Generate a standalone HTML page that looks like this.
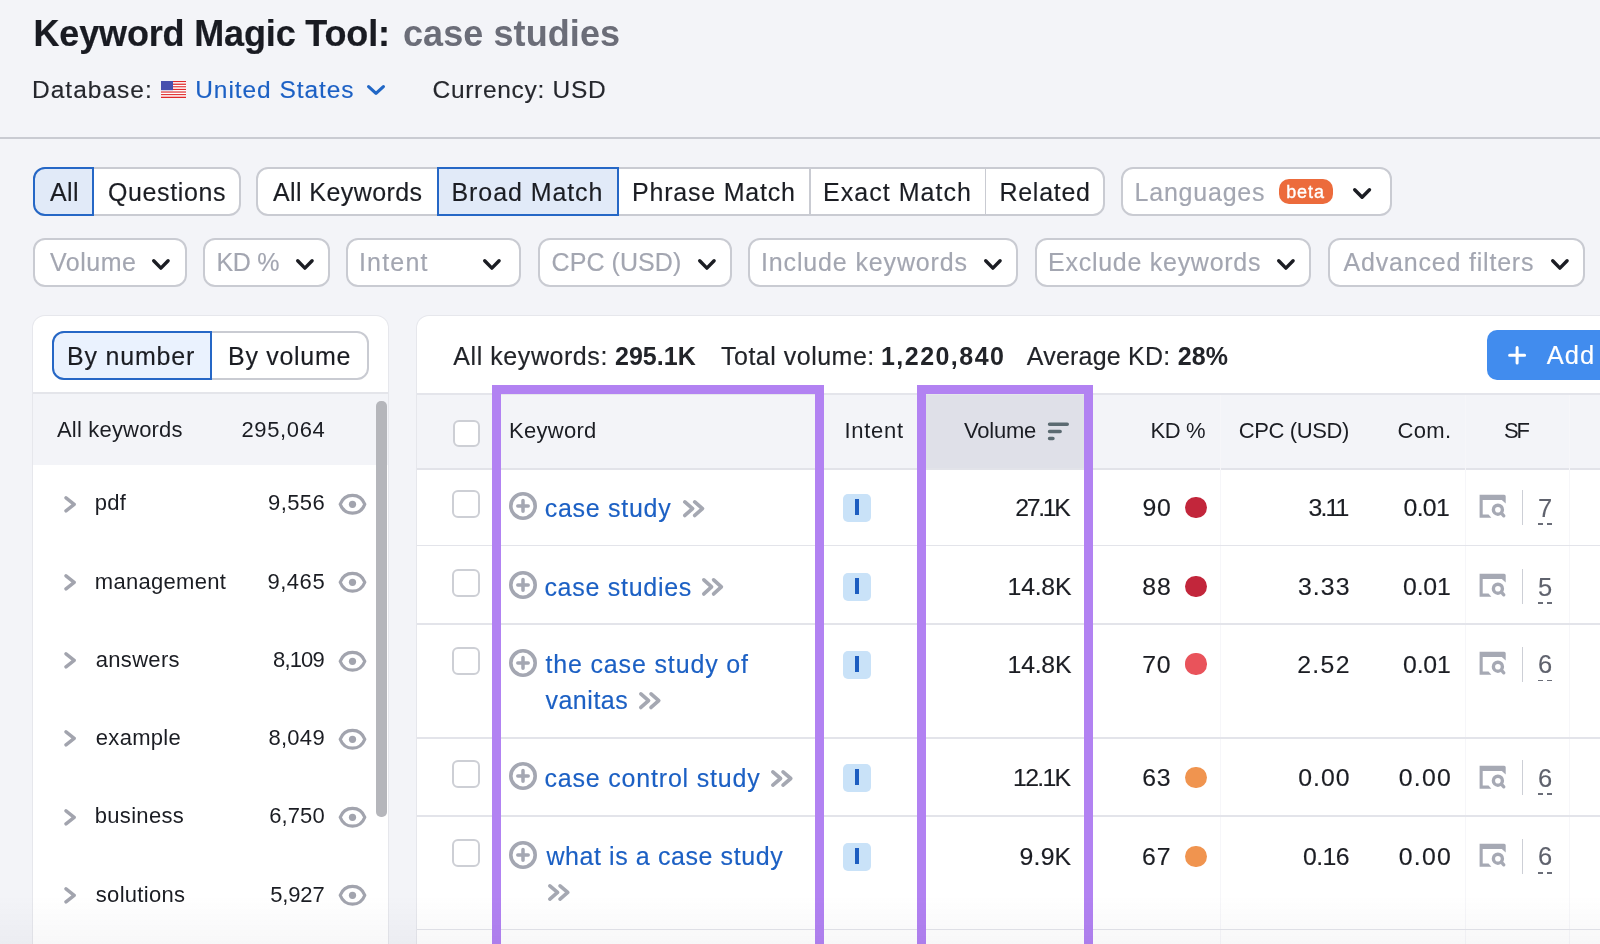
<!DOCTYPE html>
<html><head><meta charset="utf-8"><title>Keyword Magic Tool</title>
<style>
html,body{margin:0;padding:0;}
body{width:1600px;height:944px;overflow:hidden;position:relative;background:#f3f4f8;font-family:"Liberation Sans",sans-serif;}
#root{position:absolute;left:0;top:0;width:1600px;height:944px;will-change:transform;}
.t{position:absolute;white-space:nowrap;}
.t.r{-webkit-text-stroke:0.15px currentColor;}
.b{position:absolute;display:block;}
</style></head><body><div id="root">
<div class="t" style="left:33.50px;top:10.93px;font-size:36px;line-height:46.8px;font-weight:700;color:#191b22;letter-spacing:-0.159px;-webkit-text-stroke:0.2px #191b22;">Keyword Magic Tool:</div>
<div class="t" style="left:403.00px;top:10.93px;font-size:36px;line-height:46.8px;font-weight:700;color:#6b6d78;letter-spacing:0.082px;">case studies</div>
<div class="t r" style="left:32.00px;top:74.29px;font-size:24.5px;line-height:31.85px;font-weight:400;color:#25272d;letter-spacing:1.015px;">Database:</div>
<svg class="b" style="left:161px;top:81px" width="25" height="17" viewBox="0 0 25 17"><rect x="0" y="0.000" width="25" height="1.328" fill="#e0292b"/><rect x="0" y="1.308" width="25" height="1.328" fill="#ffffff"/><rect x="0" y="2.615" width="25" height="1.328" fill="#e0292b"/><rect x="0" y="3.923" width="25" height="1.328" fill="#ffffff"/><rect x="0" y="5.231" width="25" height="1.328" fill="#e0292b"/><rect x="0" y="6.538" width="25" height="1.328" fill="#ffffff"/><rect x="0" y="7.846" width="25" height="1.328" fill="#e0292b"/><rect x="0" y="9.154" width="25" height="1.328" fill="#ffffff"/><rect x="0" y="10.462" width="25" height="1.328" fill="#e0292b"/><rect x="0" y="11.769" width="25" height="1.328" fill="#ffffff"/><rect x="0" y="13.077" width="25" height="1.328" fill="#e0292b"/><rect x="0" y="14.385" width="25" height="1.328" fill="#ffffff"/><rect x="0" y="15.692" width="25" height="1.328" fill="#e0292b"/><rect x="0" y="0" width="12" height="9.2" fill="#4850ad"/></svg>
<div class="t r" style="left:195.20px;top:74.29px;font-size:24.5px;line-height:31.85px;font-weight:400;color:#1c60c4;letter-spacing:0.939px;">United States</div>
<svg class="b" style="left:365px;top:83.4px" width="22" height="14" viewBox="0 0 22 14"><polyline points="3.60,3.60 11.00,10.40 18.40,3.60" fill="none" stroke="#2167c6" stroke-width="3.2" stroke-linecap="round" stroke-linejoin="round"/></svg>
<div class="t r" style="left:432.50px;top:74.29px;font-size:24.5px;line-height:31.85px;font-weight:400;color:#25272d;letter-spacing:0.705px;">Currency: USD</div>
<div class="b" style="left:0px;top:137px;width:1600.00px;height:1.50px;background:#c9cbd2"></div>
<div class="b" style="left:33px;top:167px;width:208.00px;height:49.00px;background:#fff;border:2px solid #c9cbd2;border-radius:12px;box-sizing:border-box"></div>
<div class="b" style="left:33px;top:167px;width:60.50px;height:49.00px;background:#e1eaf8;border:2px solid #2567c6;border-radius:12px 0 0 12px;box-sizing:border-box"></div>
<div class="t r" style="left:50.00px;top:176.49px;font-size:25px;line-height:32.5px;font-weight:400;color:#1b1d23;letter-spacing:0.385px;">All</div>
<div class="t r" style="left:108.00px;top:176.49px;font-size:25px;line-height:32.5px;font-weight:400;color:#1b1d23;letter-spacing:0.617px;">Questions</div>
<div class="b" style="left:256px;top:167px;width:848.50px;height:49.00px;background:#fff;border:2px solid #c9cbd2;border-radius:12px;box-sizing:border-box"></div>
<div class="b" style="left:809.2px;top:168px;width:1.60px;height:47.00px;background:#c9cbd2"></div>
<div class="b" style="left:984.7px;top:168px;width:1.60px;height:47.00px;background:#c9cbd2"></div>
<div class="b" style="left:437px;top:167px;width:182.00px;height:49.00px;background:#e1eaf8;border:2px solid #2567c6;box-sizing:border-box"></div>
<div class="t r" style="left:273.00px;top:176.49px;font-size:25px;line-height:32.5px;font-weight:400;color:#1b1d23;letter-spacing:0.410px;">All Keywords</div>
<div class="t r" style="left:451.50px;top:176.49px;font-size:25px;line-height:32.5px;font-weight:400;color:#1b1d23;letter-spacing:0.917px;">Broad Match</div>
<div class="t r" style="left:632.00px;top:176.49px;font-size:25px;line-height:32.5px;font-weight:400;color:#1b1d23;letter-spacing:0.788px;">Phrase Match</div>
<div class="t r" style="left:823.00px;top:176.49px;font-size:25px;line-height:32.5px;font-weight:400;color:#1b1d23;letter-spacing:1.035px;">Exact Match</div>
<div class="t r" style="left:999.50px;top:176.49px;font-size:25px;line-height:32.5px;font-weight:400;color:#1b1d23;letter-spacing:0.706px;">Related</div>
<div class="b" style="left:1120.5px;top:167px;width:271.50px;height:49.00px;background:#fff;border:2px solid #c9cbd2;border-radius:12px;box-sizing:border-box"></div>
<div class="t r" style="left:1134.50px;top:176.49px;font-size:25px;line-height:32.5px;font-weight:400;color:#a3a6b1;letter-spacing:0.784px;">Languages</div>
<div class="b" style="left:1278.6px;top:178.9px;width:54.70px;height:25.10px;background:#ec6b3c;border-radius:10px"></div>
<div class="t" style="left:1286.20px;top:180.56px;font-size:18px;line-height:23.4px;font-weight:400;color:#fff;letter-spacing:0.926px;-webkit-text-stroke:0.35px #fff;">beta</div>
<svg class="b" style="left:1350.8px;top:185.9px" width="22.2" height="15" viewBox="0 0 22.2 15"><polyline points="3.70,3.70 11.10,11.30 18.50,3.70" fill="none" stroke="#1b1d23" stroke-width="3.4" stroke-linecap="round" stroke-linejoin="round"/></svg>
<div class="b" style="left:33px;top:238px;width:154.00px;height:49.00px;background:#fff;border:2px solid #c9cbd2;border-radius:12px;box-sizing:border-box"></div>
<div class="t r" style="left:50.00px;top:245.79px;font-size:25px;line-height:32.5px;font-weight:400;color:#a3a6b1;letter-spacing:0.504px;">Volume</div>
<svg class="b" style="left:150.2px;top:256.9px" width="21.8" height="14.8" viewBox="0 0 21.8 14.8"><polyline points="3.70,3.70 10.90,11.10 18.10,3.70" fill="none" stroke="#1b1d23" stroke-width="3.4" stroke-linecap="round" stroke-linejoin="round"/></svg>
<div class="b" style="left:202.5px;top:238px;width:127.50px;height:49.00px;background:#fff;border:2px solid #c9cbd2;border-radius:12px;box-sizing:border-box"></div>
<div class="t r" style="left:216.50px;top:245.79px;font-size:25px;line-height:32.5px;font-weight:400;color:#a3a6b1;letter-spacing:-0.300px;">KD %</div>
<svg class="b" style="left:293.7px;top:256.9px" width="21.8" height="14.8" viewBox="0 0 21.8 14.8"><polyline points="3.70,3.70 10.90,11.10 18.10,3.70" fill="none" stroke="#1b1d23" stroke-width="3.4" stroke-linecap="round" stroke-linejoin="round"/></svg>
<div class="b" style="left:345.5px;top:238px;width:175.50px;height:49.00px;background:#fff;border:2px solid #c9cbd2;border-radius:12px;box-sizing:border-box"></div>
<div class="t r" style="left:359.00px;top:245.79px;font-size:25px;line-height:32.5px;font-weight:400;color:#a3a6b1;letter-spacing:1.179px;">Intent</div>
<svg class="b" style="left:481.2px;top:256.9px" width="21.8" height="14.8" viewBox="0 0 21.8 14.8"><polyline points="3.70,3.70 10.90,11.10 18.10,3.70" fill="none" stroke="#1b1d23" stroke-width="3.4" stroke-linecap="round" stroke-linejoin="round"/></svg>
<div class="b" style="left:537.5px;top:238px;width:194.50px;height:49.00px;background:#fff;border:2px solid #c9cbd2;border-radius:12px;box-sizing:border-box"></div>
<div class="t r" style="left:551.50px;top:245.79px;font-size:25px;line-height:32.5px;font-weight:400;color:#a3a6b1;letter-spacing:0.083px;">CPC (USD)</div>
<svg class="b" style="left:696.2px;top:256.9px" width="21.8" height="14.8" viewBox="0 0 21.8 14.8"><polyline points="3.70,3.70 10.90,11.10 18.10,3.70" fill="none" stroke="#1b1d23" stroke-width="3.4" stroke-linecap="round" stroke-linejoin="round"/></svg>
<div class="b" style="left:747.5px;top:238px;width:270.50px;height:49.00px;background:#fff;border:2px solid #c9cbd2;border-radius:12px;box-sizing:border-box"></div>
<div class="t r" style="left:761.00px;top:245.79px;font-size:25px;line-height:32.5px;font-weight:400;color:#a3a6b1;letter-spacing:0.857px;">Include keywords</div>
<svg class="b" style="left:982.2px;top:256.9px" width="21.8" height="14.8" viewBox="0 0 21.8 14.8"><polyline points="3.70,3.70 10.90,11.10 18.10,3.70" fill="none" stroke="#1b1d23" stroke-width="3.4" stroke-linecap="round" stroke-linejoin="round"/></svg>
<div class="b" style="left:1034.5px;top:238px;width:276.50px;height:49.00px;background:#fff;border:2px solid #c9cbd2;border-radius:12px;box-sizing:border-box"></div>
<div class="t r" style="left:1048.00px;top:245.79px;font-size:25px;line-height:32.5px;font-weight:400;color:#a3a6b1;letter-spacing:0.735px;">Exclude keywords</div>
<svg class="b" style="left:1275.2px;top:256.9px" width="21.8" height="14.8" viewBox="0 0 21.8 14.8"><polyline points="3.70,3.70 10.90,11.10 18.10,3.70" fill="none" stroke="#1b1d23" stroke-width="3.4" stroke-linecap="round" stroke-linejoin="round"/></svg>
<div class="b" style="left:1327.5px;top:238px;width:257.50px;height:49.00px;background:#fff;border:2px solid #c9cbd2;border-radius:12px;box-sizing:border-box"></div>
<div class="t r" style="left:1343.50px;top:245.79px;font-size:25px;line-height:32.5px;font-weight:400;color:#a3a6b1;letter-spacing:0.809px;">Advanced filters</div>
<svg class="b" style="left:1548.7px;top:256.9px" width="21.8" height="14.8" viewBox="0 0 21.8 14.8"><polyline points="3.70,3.70 10.90,11.10 18.10,3.70" fill="none" stroke="#1b1d23" stroke-width="3.4" stroke-linecap="round" stroke-linejoin="round"/></svg>
<div class="b" style="left:33px;top:315.5px;width:355.00px;height:644.50px;background:#fff;border-radius:12px;box-shadow:0 0 0 1px #e6e7ec"></div>
<div class="b" style="left:52px;top:330.5px;width:317.00px;height:49.00px;background:#fff;border:2px solid #c9cbd2;border-radius:12px;box-sizing:border-box"></div>
<div class="b" style="left:52px;top:330.5px;width:159.50px;height:49.00px;background:#eaf2fe;border:2px solid #2567c6;border-radius:12px 0 0 12px;box-sizing:border-box"></div>
<div class="t r" style="left:67.00px;top:339.79px;font-size:25px;line-height:32.5px;font-weight:400;color:#1b1d23;letter-spacing:0.805px;">By number</div>
<div class="t r" style="left:228.00px;top:339.79px;font-size:25px;line-height:32.5px;font-weight:400;color:#1b1d23;letter-spacing:0.712px;">By volume</div>
<div class="b" style="left:33px;top:392px;width:355.00px;height:2.00px;background:#e4e5ea"></div>
<div class="b" style="left:33px;top:394px;width:355.00px;height:71.00px;background:#f3f4f8"></div>
<div class="t" style="left:57.00px;top:415.78px;font-size:22px;line-height:28.6px;font-weight:400;color:#1b1d23;letter-spacing:0.184px;">All keywords</div>
<div class="t" style="left:241.50px;top:415.78px;font-size:22px;line-height:28.6px;font-weight:400;color:#1b1d23;letter-spacing:0.618px;">295,064</div>
<div class="b" style="left:376px;top:401px;width:10.50px;height:416.00px;background:#b5b6bb;border-radius:5px"></div>
<svg class="b" style="left:62px;top:493.5px" width="16" height="19" viewBox="0 0 16 19"><polyline points="4,3.8 12.2,10.35 4,16.9" fill="none" stroke="#a2a4ae" stroke-width="3.4" stroke-linecap="round" stroke-linejoin="round"/></svg>
<div class="t" style="left:94.80px;top:489.28px;font-size:22px;line-height:28.6px;font-weight:400;color:#1b1d23;letter-spacing:0.300px;">pdf</div>
<div class="t" style="left:268.00px;top:489.28px;font-size:22px;line-height:28.6px;font-weight:400;color:#1b1d23;letter-spacing:0.395px;">9,556</div>
<svg class="b" style="left:336px;top:490.0px" width="34" height="28" viewBox="0 0 34 28"><path d="M4.2,14.3 C7,7 12,5.4 16.5,5.4 C21,5.4 26,7 28.8,14.3 C26,21.6 21,23.2 16.5,23.2 C12,23.2 7,21.6 4.2,14.3 Z" fill="none" stroke="#a2a4ae" stroke-width="3.2" stroke-linejoin="round"/><circle cx="16.5" cy="14.3" r="3.6" fill="#a2a4ae"/></svg>
<svg class="b" style="left:62px;top:571.75px" width="16" height="19" viewBox="0 0 16 19"><polyline points="4,3.8 12.2,10.35 4,16.9" fill="none" stroke="#a2a4ae" stroke-width="3.4" stroke-linecap="round" stroke-linejoin="round"/></svg>
<div class="t" style="left:94.80px;top:567.53px;font-size:22px;line-height:28.6px;font-weight:400;color:#1b1d23;letter-spacing:0.300px;">management</div>
<div class="t" style="left:267.40px;top:567.53px;font-size:22px;line-height:28.6px;font-weight:400;color:#1b1d23;letter-spacing:0.545px;">9,465</div>
<svg class="b" style="left:336px;top:568.25px" width="34" height="28" viewBox="0 0 34 28"><path d="M4.2,14.3 C7,7 12,5.4 16.5,5.4 C21,5.4 26,7 28.8,14.3 C26,21.6 21,23.2 16.5,23.2 C12,23.2 7,21.6 4.2,14.3 Z" fill="none" stroke="#a2a4ae" stroke-width="3.2" stroke-linejoin="round"/><circle cx="16.5" cy="14.3" r="3.6" fill="#a2a4ae"/></svg>
<svg class="b" style="left:62px;top:650.0px" width="16" height="19" viewBox="0 0 16 19"><polyline points="4,3.8 12.2,10.35 4,16.9" fill="none" stroke="#a2a4ae" stroke-width="3.4" stroke-linecap="round" stroke-linejoin="round"/></svg>
<div class="t" style="left:95.80px;top:645.78px;font-size:22px;line-height:28.6px;font-weight:400;color:#1b1d23;letter-spacing:0.300px;">answers</div>
<div class="t" style="left:273.10px;top:645.78px;font-size:22px;line-height:28.6px;font-weight:400;color:#1b1d23;letter-spacing:-0.880px;">8,109</div>
<svg class="b" style="left:336px;top:646.5px" width="34" height="28" viewBox="0 0 34 28"><path d="M4.2,14.3 C7,7 12,5.4 16.5,5.4 C21,5.4 26,7 28.8,14.3 C26,21.6 21,23.2 16.5,23.2 C12,23.2 7,21.6 4.2,14.3 Z" fill="none" stroke="#a2a4ae" stroke-width="3.2" stroke-linejoin="round"/><circle cx="16.5" cy="14.3" r="3.6" fill="#a2a4ae"/></svg>
<svg class="b" style="left:62px;top:728.25px" width="16" height="19" viewBox="0 0 16 19"><polyline points="4,3.8 12.2,10.35 4,16.9" fill="none" stroke="#a2a4ae" stroke-width="3.4" stroke-linecap="round" stroke-linejoin="round"/></svg>
<div class="t" style="left:95.80px;top:724.03px;font-size:22px;line-height:28.6px;font-weight:400;color:#1b1d23;letter-spacing:0.300px;">example</div>
<div class="t" style="left:268.40px;top:724.03px;font-size:22px;line-height:28.6px;font-weight:400;color:#1b1d23;letter-spacing:0.295px;">8,049</div>
<svg class="b" style="left:336px;top:724.75px" width="34" height="28" viewBox="0 0 34 28"><path d="M4.2,14.3 C7,7 12,5.4 16.5,5.4 C21,5.4 26,7 28.8,14.3 C26,21.6 21,23.2 16.5,23.2 C12,23.2 7,21.6 4.2,14.3 Z" fill="none" stroke="#a2a4ae" stroke-width="3.2" stroke-linejoin="round"/><circle cx="16.5" cy="14.3" r="3.6" fill="#a2a4ae"/></svg>
<svg class="b" style="left:62px;top:806.5px" width="16" height="19" viewBox="0 0 16 19"><polyline points="4,3.8 12.2,10.35 4,16.9" fill="none" stroke="#a2a4ae" stroke-width="3.4" stroke-linecap="round" stroke-linejoin="round"/></svg>
<div class="t" style="left:94.80px;top:802.28px;font-size:22px;line-height:28.6px;font-weight:400;color:#1b1d23;letter-spacing:0.300px;">business</div>
<div class="t" style="left:269.20px;top:802.28px;font-size:22px;line-height:28.6px;font-weight:400;color:#1b1d23;letter-spacing:0.095px;">6,750</div>
<svg class="b" style="left:336px;top:803.0px" width="34" height="28" viewBox="0 0 34 28"><path d="M4.2,14.3 C7,7 12,5.4 16.5,5.4 C21,5.4 26,7 28.8,14.3 C26,21.6 21,23.2 16.5,23.2 C12,23.2 7,21.6 4.2,14.3 Z" fill="none" stroke="#a2a4ae" stroke-width="3.2" stroke-linejoin="round"/><circle cx="16.5" cy="14.3" r="3.6" fill="#a2a4ae"/></svg>
<svg class="b" style="left:62px;top:884.75px" width="16" height="19" viewBox="0 0 16 19"><polyline points="4,3.8 12.2,10.35 4,16.9" fill="none" stroke="#a2a4ae" stroke-width="3.4" stroke-linecap="round" stroke-linejoin="round"/></svg>
<div class="t" style="left:95.80px;top:880.53px;font-size:22px;line-height:28.6px;font-weight:400;color:#1b1d23;letter-spacing:0.300px;">solutions</div>
<div class="t" style="left:270.20px;top:880.53px;font-size:22px;line-height:28.6px;font-weight:400;color:#1b1d23;letter-spacing:-0.155px;">5,927</div>
<svg class="b" style="left:336px;top:881.25px" width="34" height="28" viewBox="0 0 34 28"><path d="M4.2,14.3 C7,7 12,5.4 16.5,5.4 C21,5.4 26,7 28.8,14.3 C26,21.6 21,23.2 16.5,23.2 C12,23.2 7,21.6 4.2,14.3 Z" fill="none" stroke="#a2a4ae" stroke-width="3.2" stroke-linejoin="round"/><circle cx="16.5" cy="14.3" r="3.6" fill="#a2a4ae"/></svg>
<div class="b" style="left:417px;top:315.5px;width:1283.00px;height:644.50px;background:#fff;border-radius:12px;box-shadow:0 0 0 1px #e6e7ec"></div>
<div class="t r" style="left:453.30px;top:339.59px;font-size:25px;line-height:32.5px;font-weight:400;color:#222429;letter-spacing:0.565px;">All keywords:</div>
<div class="t" style="left:615.00px;top:339.59px;font-size:25px;line-height:32.5px;font-weight:700;color:#222429;letter-spacing:0.028px;">295.1K</div>
<div class="t r" style="left:721.00px;top:339.59px;font-size:25px;line-height:32.5px;font-weight:400;color:#222429;letter-spacing:0.496px;">Total volume:</div>
<div class="t" style="left:881.00px;top:339.59px;font-size:25px;line-height:32.5px;font-weight:700;color:#222429;letter-spacing:1.461px;">1,220,840</div>
<div class="t r" style="left:1026.80px;top:339.59px;font-size:25px;line-height:32.5px;font-weight:400;color:#222429;letter-spacing:0.206px;">Average KD:</div>
<div class="t" style="left:1177.70px;top:339.59px;font-size:25px;line-height:32.5px;font-weight:700;color:#222429;letter-spacing:0.146px;">28%</div>
<div class="b" style="left:1487.1px;top:330.1px;width:212.90px;height:49.50px;background:#418cee;border-radius:10px"></div>
<svg class="b" style="left:1506px;top:343.6px" width="22" height="22" viewBox="0 0 22 22"><path d="M11.1,3.5 V19.0 M3.6,11.2 H18.6" stroke="#fff" stroke-width="3" stroke-linecap="round"/></svg>
<div class="t r" style="left:1546.80px;top:338.59px;font-size:25.5px;line-height:33.15px;font-weight:400;color:#fff;letter-spacing:0.955px;">Add</div>
<div class="b" style="left:417px;top:392.5px;width:1183.00px;height:2.00px;background:#e4e5eb"></div>
<div class="b" style="left:417px;top:394.5px;width:1183.00px;height:73.00px;background:#f3f4f8"></div>
<div class="b" style="left:926px;top:394.5px;width:158.00px;height:73.50px;background:#dfe0e8"></div>
<div class="b" style="left:417px;top:467.5px;width:1183.00px;height:2.00px;background:#e2e3e9"></div>
<div class="b" style="left:452.5px;top:419.5px;width:27.50px;height:27.50px;background:#fff;border:2px solid #cdcfd5;border-radius:6px;box-sizing:border-box"></div>
<div class="t" style="left:509.00px;top:416.78px;font-size:22px;line-height:28.6px;font-weight:400;color:#1b1d23;letter-spacing:0.274px;">Keyword</div>
<div class="t" style="left:844.50px;top:416.78px;font-size:22px;line-height:28.6px;font-weight:400;color:#1b1d23;letter-spacing:0.714px;">Intent</div>
<div class="t" style="left:964.00px;top:416.78px;font-size:22px;line-height:28.6px;font-weight:400;color:#1b1d23;letter-spacing:-0.229px;">Volume</div>
<svg class="b" style="left:1045px;top:420px" width="26" height="22" viewBox="0 0 26 22"><path d="M4.55,4.15 H22.25 M4.55,11.5 H15.15 M4.55,18.6 H7.95" stroke="#5b6a71" stroke-width="3.5" stroke-linecap="round"/></svg>
<div class="t" style="left:1150.53px;top:416.78px;font-size:22px;line-height:28.6px;font-weight:400;color:#1b1d23;letter-spacing:-0.400px;">KD %</div>
<div class="t" style="left:1238.70px;top:416.78px;font-size:22px;line-height:28.6px;font-weight:400;color:#1b1d23;letter-spacing:-0.380px;">CPC (USD)</div>
<div class="t" style="left:1397.60px;top:416.78px;font-size:22px;line-height:28.6px;font-weight:400;color:#1b1d23;letter-spacing:0.317px;">Com.</div>
<div class="t" style="left:1504.00px;top:416.78px;font-size:22px;line-height:28.6px;font-weight:400;color:#1b1d23;letter-spacing:-2.174px;">SF</div>
<div class="b" style="left:1220px;top:394.5px;width:1.00px;height:565.50px;background:#f6f6f9"></div>
<div class="b" style="left:1464.5px;top:394.5px;width:1.00px;height:565.50px;background:#f6f6f9"></div>
<div class="b" style="left:1569px;top:394.5px;width:1.00px;height:565.50px;background:#f6f6f9"></div>
<div class="b" style="left:417px;top:544.7px;width:1183.00px;height:1.60px;background:#e3e4ea"></div>
<div class="b" style="left:417px;top:622.95px;width:1183.00px;height:1.60px;background:#e3e4ea"></div>
<div class="b" style="left:417px;top:737.0px;width:1183.00px;height:1.60px;background:#e3e4ea"></div>
<div class="b" style="left:417px;top:815.0px;width:1183.00px;height:1.60px;background:#e3e4ea"></div>
<div class="b" style="left:417px;top:928.9000000000001px;width:1183.00px;height:1.60px;background:#e3e4ea"></div>
<div class="b" style="left:452.4px;top:490.0px;width:27.80px;height:28.00px;background:#fff;border:2px solid #cdcfd5;border-radius:6px;box-sizing:border-box"></div>
<svg class="b" style="left:507.1px;top:489.8px" width="32" height="32" viewBox="0 0 32 32"><circle cx="16" cy="16" r="12.2" fill="none" stroke="#a4a7b2" stroke-width="3.6"/><path d="M16,10.6 V21.2 M10.8,16 H21.2" stroke="#a4a7b2" stroke-width="3.5" stroke-linecap="round"/></svg>
<div class="t r" style="left:544.70px;top:491.79px;font-size:25px;line-height:32.5px;font-weight:400;color:#1c60c4;letter-spacing:0.721px;">case study</div>
<svg class="b" style="left:681px;top:498px" width="25.3" height="21.3" viewBox="0 0 25.3 21.3"><polyline points="3.85,3.85 11.55,10.65 3.85,17.45" fill="none" stroke="#a5a8b2" stroke-width="3.7" stroke-linecap="round" stroke-linejoin="round"/><polyline points="13.75,3.85 21.45,10.65 13.75,17.45" fill="none" stroke="#a5a8b2" stroke-width="3.7" stroke-linecap="round" stroke-linejoin="round"/></svg>
<div class="b" style="left:843px;top:493.8px;width:28.06px;height:28.25px;background:#c9e2f8;border-radius:5px"></div>
<div class="b" style="left:855.2px;top:499.3px;width:3.40px;height:15.60px;background:#1d5dc0"></div>
<div class="t r" style="left:1015.25px;top:491.99px;font-size:24.8px;line-height:32.24px;font-weight:400;color:#1b1d23;letter-spacing:-2.315px;">27.1K</div>
<div class="t r" style="left:1142.41px;top:491.99px;font-size:24.8px;line-height:32.24px;font-weight:400;color:#1b1d23;letter-spacing:0.800px;">90</div>
<div class="b" style="left:1185.4px;top:496.7px;width:21.20px;height:21.20px;background:#c2263b;border-radius:50%"></div>
<div class="t r" style="left:1308.60px;top:491.99px;font-size:24.8px;line-height:32.24px;font-weight:400;color:#1b1d23;letter-spacing:-1.943px;">3.11</div>
<div class="t r" style="left:1403.50px;top:491.99px;font-size:24.8px;line-height:32.24px;font-weight:400;color:#1b1d23;letter-spacing:-0.657px;">0.01</div>
<svg class="b" style="left:1477px;top:493.40000000000003px" width="32" height="28" viewBox="0 0 32 28"><path d="M2.6,1.8 H27.2 Q28.7,1.8 28.7,3.3 V10.5 L24.8,7.1 H5.7 V21.5 H11.5 L14.4,24.8 H2.6 Z" fill="#a6a9b4"/><circle cx="20.9" cy="16.7" r="4.5" fill="none" stroke="#a6a9b4" stroke-width="3.4"/><path d="M24.4,20.2 L26.8,22.8" stroke="#a6a9b4" stroke-width="3.3" stroke-linecap="round"/></svg>
<div class="b" style="left:1522px;top:490.2px;width:1.30px;height:35.20px;background:#cdcfd6"></div>
<div class="t r" style="left:1537.90px;top:491.59px;font-size:25.5px;line-height:33.15px;font-weight:400;color:#5f626d;letter-spacing:0.000px;">7</div>
<div class="b" style="left:1537.8px;top:523.0px;width:5.20px;height:1.80px;background:#6a6d78"></div>
<div class="b" style="left:1546.8px;top:523.0px;width:5.20px;height:1.80px;background:#6a6d78"></div>
<div class="b" style="left:452.4px;top:569.0px;width:27.80px;height:28.00px;background:#fff;border:2px solid #cdcfd5;border-radius:6px;box-sizing:border-box"></div>
<svg class="b" style="left:507.1px;top:568.8px" width="32" height="32" viewBox="0 0 32 32"><circle cx="16" cy="16" r="12.2" fill="none" stroke="#a4a7b2" stroke-width="3.6"/><path d="M16,10.6 V21.2 M10.8,16 H21.2" stroke="#a4a7b2" stroke-width="3.5" stroke-linecap="round"/></svg>
<div class="t r" style="left:544.40px;top:570.89px;font-size:25px;line-height:32.5px;font-weight:400;color:#1c60c4;letter-spacing:0.721px;">case studies</div>
<svg class="b" style="left:700.4px;top:575.8px" width="25.2" height="21.8" viewBox="0 0 25.2 21.8"><polyline points="3.85,3.85 11.55,10.90 3.85,17.95" fill="none" stroke="#a5a8b2" stroke-width="3.7" stroke-linecap="round" stroke-linejoin="round"/><polyline points="13.65,3.85 21.35,10.90 13.65,17.95" fill="none" stroke="#a5a8b2" stroke-width="3.7" stroke-linecap="round" stroke-linejoin="round"/></svg>
<div class="b" style="left:843px;top:572.8px;width:28.06px;height:28.25px;background:#c9e2f8;border-radius:5px"></div>
<div class="b" style="left:855.2px;top:578.3px;width:3.40px;height:15.60px;background:#1d5dc0"></div>
<div class="t r" style="left:1007.60px;top:570.99px;font-size:24.8px;line-height:32.24px;font-weight:400;color:#1b1d23;letter-spacing:-0.240px;">14.8K</div>
<div class="t r" style="left:1142.31px;top:570.99px;font-size:24.8px;line-height:32.24px;font-weight:400;color:#1b1d23;letter-spacing:0.800px;">88</div>
<div class="b" style="left:1185.4px;top:575.7px;width:21.20px;height:21.20px;background:#c2263b;border-radius:50%"></div>
<div class="t r" style="left:1298.00px;top:570.99px;font-size:24.8px;line-height:32.24px;font-weight:400;color:#1b1d23;letter-spacing:1.076px;">3.33</div>
<div class="t r" style="left:1403.00px;top:570.99px;font-size:24.8px;line-height:32.24px;font-weight:400;color:#1b1d23;letter-spacing:-0.157px;">0.01</div>
<svg class="b" style="left:1477px;top:572.4px" width="32" height="28" viewBox="0 0 32 28"><path d="M2.6,1.8 H27.2 Q28.7,1.8 28.7,3.3 V10.5 L24.8,7.1 H5.7 V21.5 H11.5 L14.4,24.8 H2.6 Z" fill="#a6a9b4"/><circle cx="20.9" cy="16.7" r="4.5" fill="none" stroke="#a6a9b4" stroke-width="3.4"/><path d="M24.4,20.2 L26.8,22.8" stroke="#a6a9b4" stroke-width="3.3" stroke-linecap="round"/></svg>
<div class="b" style="left:1522px;top:569.2px;width:1.30px;height:35.20px;background:#cdcfd6"></div>
<div class="t r" style="left:1537.90px;top:570.59px;font-size:25.5px;line-height:33.15px;font-weight:400;color:#5f626d;letter-spacing:0.000px;">5</div>
<div class="b" style="left:1537.8px;top:602.0px;width:5.20px;height:1.80px;background:#6a6d78"></div>
<div class="b" style="left:1546.8px;top:602.0px;width:5.20px;height:1.80px;background:#6a6d78"></div>
<div class="b" style="left:452.4px;top:646.7px;width:27.80px;height:28.00px;background:#fff;border:2px solid #cdcfd5;border-radius:6px;box-sizing:border-box"></div>
<svg class="b" style="left:507.1px;top:646.5px" width="32" height="32" viewBox="0 0 32 32"><circle cx="16" cy="16" r="12.2" fill="none" stroke="#a4a7b2" stroke-width="3.6"/><path d="M16,10.6 V21.2 M10.8,16 H21.2" stroke="#a4a7b2" stroke-width="3.5" stroke-linecap="round"/></svg>
<div class="t r" style="left:545.40px;top:648.49px;font-size:25px;line-height:32.5px;font-weight:400;color:#1c60c4;letter-spacing:0.853px;">the case study of</div>
<div class="t r" style="left:545.40px;top:684.09px;font-size:25px;line-height:32.5px;font-weight:400;color:#1c60c4;letter-spacing:0.531px;">vanitas</div>
<svg class="b" style="left:637.2px;top:689.9px" width="25.6" height="21.3" viewBox="0 0 25.6 21.3"><polyline points="3.85,3.85 11.55,10.65 3.85,17.45" fill="none" stroke="#a5a8b2" stroke-width="3.7" stroke-linecap="round" stroke-linejoin="round"/><polyline points="14.05,3.85 21.75,10.65 14.05,17.45" fill="none" stroke="#a5a8b2" stroke-width="3.7" stroke-linecap="round" stroke-linejoin="round"/></svg>
<div class="b" style="left:843px;top:650.5px;width:28.06px;height:28.25px;background:#c9e2f8;border-radius:5px"></div>
<div class="b" style="left:855.2px;top:656.0px;width:3.40px;height:15.60px;background:#1d5dc0"></div>
<div class="t r" style="left:1007.60px;top:648.69px;font-size:24.8px;line-height:32.24px;font-weight:400;color:#1b1d23;letter-spacing:-0.240px;">14.8K</div>
<div class="t r" style="left:1142.21px;top:648.69px;font-size:24.8px;line-height:32.24px;font-weight:400;color:#1b1d23;letter-spacing:0.800px;">70</div>
<div class="b" style="left:1185.4px;top:653.4000000000001px;width:21.20px;height:21.20px;background:#e9535b;border-radius:50%"></div>
<div class="t r" style="left:1297.20px;top:648.69px;font-size:24.8px;line-height:32.24px;font-weight:400;color:#1b1d23;letter-spacing:1.343px;">2.52</div>
<div class="t r" style="left:1403.00px;top:648.69px;font-size:24.8px;line-height:32.24px;font-weight:400;color:#1b1d23;letter-spacing:-0.157px;">0.01</div>
<svg class="b" style="left:1477px;top:650.1px" width="32" height="28" viewBox="0 0 32 28"><path d="M2.6,1.8 H27.2 Q28.7,1.8 28.7,3.3 V10.5 L24.8,7.1 H5.7 V21.5 H11.5 L14.4,24.8 H2.6 Z" fill="#a6a9b4"/><circle cx="20.9" cy="16.7" r="4.5" fill="none" stroke="#a6a9b4" stroke-width="3.4"/><path d="M24.4,20.2 L26.8,22.8" stroke="#a6a9b4" stroke-width="3.3" stroke-linecap="round"/></svg>
<div class="b" style="left:1522px;top:646.9000000000001px;width:1.30px;height:35.20px;background:#cdcfd6"></div>
<div class="t r" style="left:1537.90px;top:648.29px;font-size:25.5px;line-height:33.15px;font-weight:400;color:#5f626d;letter-spacing:0.000px;">6</div>
<div class="b" style="left:1537.8px;top:679.7px;width:5.20px;height:1.80px;background:#6a6d78"></div>
<div class="b" style="left:1546.8px;top:679.7px;width:5.20px;height:1.80px;background:#6a6d78"></div>
<div class="b" style="left:452.4px;top:760.1px;width:27.80px;height:28.00px;background:#fff;border:2px solid #cdcfd5;border-radius:6px;box-sizing:border-box"></div>
<svg class="b" style="left:507.1px;top:759.9px" width="32" height="32" viewBox="0 0 32 32"><circle cx="16" cy="16" r="12.2" fill="none" stroke="#a4a7b2" stroke-width="3.6"/><path d="M16,10.6 V21.2 M10.8,16 H21.2" stroke="#a4a7b2" stroke-width="3.5" stroke-linecap="round"/></svg>
<div class="t r" style="left:544.40px;top:761.89px;font-size:25px;line-height:32.5px;font-weight:400;color:#1c60c4;letter-spacing:0.818px;">case control study</div>
<svg class="b" style="left:769.4px;top:768px" width="25.6" height="21" viewBox="0 0 25.6 21"><polyline points="3.85,3.85 11.55,10.50 3.85,17.15" fill="none" stroke="#a5a8b2" stroke-width="3.7" stroke-linecap="round" stroke-linejoin="round"/><polyline points="14.05,3.85 21.75,10.50 14.05,17.15" fill="none" stroke="#a5a8b2" stroke-width="3.7" stroke-linecap="round" stroke-linejoin="round"/></svg>
<div class="b" style="left:843px;top:763.9px;width:28.06px;height:28.25px;background:#c9e2f8;border-radius:5px"></div>
<div class="b" style="left:855.2px;top:769.4px;width:3.40px;height:15.60px;background:#1d5dc0"></div>
<div class="t r" style="left:1013.00px;top:762.09px;font-size:24.8px;line-height:32.24px;font-weight:400;color:#1b1d23;letter-spacing:-1.665px;">12.1K</div>
<div class="t r" style="left:1142.21px;top:762.09px;font-size:24.8px;line-height:32.24px;font-weight:400;color:#1b1d23;letter-spacing:0.800px;">63</div>
<div class="b" style="left:1185.4px;top:766.8000000000001px;width:21.20px;height:21.20px;background:#f0944f;border-radius:50%"></div>
<div class="t r" style="left:1298.20px;top:762.09px;font-size:24.8px;line-height:32.24px;font-weight:400;color:#1b1d23;letter-spacing:1.010px;">0.00</div>
<div class="t r" style="left:1398.80px;top:762.09px;font-size:24.8px;line-height:32.24px;font-weight:400;color:#1b1d23;letter-spacing:1.243px;">0.00</div>
<svg class="b" style="left:1477px;top:763.5px" width="32" height="28" viewBox="0 0 32 28"><path d="M2.6,1.8 H27.2 Q28.7,1.8 28.7,3.3 V10.5 L24.8,7.1 H5.7 V21.5 H11.5 L14.4,24.8 H2.6 Z" fill="#a6a9b4"/><circle cx="20.9" cy="16.7" r="4.5" fill="none" stroke="#a6a9b4" stroke-width="3.4"/><path d="M24.4,20.2 L26.8,22.8" stroke="#a6a9b4" stroke-width="3.3" stroke-linecap="round"/></svg>
<div class="b" style="left:1522px;top:760.3000000000001px;width:1.30px;height:35.20px;background:#cdcfd6"></div>
<div class="t r" style="left:1537.90px;top:761.69px;font-size:25.5px;line-height:33.15px;font-weight:400;color:#5f626d;letter-spacing:0.000px;">6</div>
<div class="b" style="left:1537.8px;top:793.1px;width:5.20px;height:1.80px;background:#6a6d78"></div>
<div class="b" style="left:1546.8px;top:793.1px;width:5.20px;height:1.80px;background:#6a6d78"></div>
<div class="b" style="left:452.4px;top:838.8px;width:27.80px;height:28.00px;background:#fff;border:2px solid #cdcfd5;border-radius:6px;box-sizing:border-box"></div>
<svg class="b" style="left:507.1px;top:838.5999999999999px" width="32" height="32" viewBox="0 0 32 32"><circle cx="16" cy="16" r="12.2" fill="none" stroke="#a4a7b2" stroke-width="3.6"/><path d="M16,10.6 V21.2 M10.8,16 H21.2" stroke="#a4a7b2" stroke-width="3.5" stroke-linecap="round"/></svg>
<div class="t r" style="left:546.40px;top:840.49px;font-size:25px;line-height:32.5px;font-weight:400;color:#1c60c4;letter-spacing:0.589px;">what is a case study</div>
<svg class="b" style="left:545.6px;top:881.9px" width="25.6" height="20.9" viewBox="0 0 25.6 20.9"><polyline points="3.85,3.85 11.55,10.45 3.85,17.05" fill="none" stroke="#a5a8b2" stroke-width="3.7" stroke-linecap="round" stroke-linejoin="round"/><polyline points="14.05,3.85 21.75,10.45 14.05,17.05" fill="none" stroke="#a5a8b2" stroke-width="3.7" stroke-linecap="round" stroke-linejoin="round"/></svg>
<div class="b" style="left:843px;top:842.5999999999999px;width:28.06px;height:28.25px;background:#c9e2f8;border-radius:5px"></div>
<div class="b" style="left:855.2px;top:848.0999999999999px;width:3.40px;height:15.60px;background:#1d5dc0"></div>
<div class="t r" style="left:1019.60px;top:840.79px;font-size:24.8px;line-height:32.24px;font-weight:400;color:#1b1d23;letter-spacing:0.176px;">9.9K</div>
<div class="t r" style="left:1142.11px;top:840.79px;font-size:24.8px;line-height:32.24px;font-weight:400;color:#1b1d23;letter-spacing:0.800px;">67</div>
<div class="b" style="left:1185.4px;top:845.5px;width:21.20px;height:21.20px;background:#f0944f;border-radius:50%"></div>
<div class="t r" style="left:1303.00px;top:840.79px;font-size:24.8px;line-height:32.24px;font-weight:400;color:#1b1d23;letter-spacing:-0.590px;">0.16</div>
<div class="t r" style="left:1398.80px;top:840.79px;font-size:24.8px;line-height:32.24px;font-weight:400;color:#1b1d23;letter-spacing:1.243px;">0.00</div>
<svg class="b" style="left:1477px;top:842.1999999999999px" width="32" height="28" viewBox="0 0 32 28"><path d="M2.6,1.8 H27.2 Q28.7,1.8 28.7,3.3 V10.5 L24.8,7.1 H5.7 V21.5 H11.5 L14.4,24.8 H2.6 Z" fill="#a6a9b4"/><circle cx="20.9" cy="16.7" r="4.5" fill="none" stroke="#a6a9b4" stroke-width="3.4"/><path d="M24.4,20.2 L26.8,22.8" stroke="#a6a9b4" stroke-width="3.3" stroke-linecap="round"/></svg>
<div class="b" style="left:1522px;top:839.0px;width:1.30px;height:35.20px;background:#cdcfd6"></div>
<div class="t r" style="left:1537.90px;top:840.39px;font-size:25.5px;line-height:33.15px;font-weight:400;color:#5f626d;letter-spacing:0.000px;">6</div>
<div class="b" style="left:1537.8px;top:871.8px;width:5.20px;height:1.80px;background:#6a6d78"></div>
<div class="b" style="left:1546.8px;top:871.8px;width:5.20px;height:1.80px;background:#6a6d78"></div>
<div class="b" style="left:492px;top:385px;width:332.00px;height:615.00px;border:9px solid #b282f2;box-sizing:border-box"></div>
<div class="b" style="left:917px;top:385px;width:176.00px;height:615.00px;border:9px solid #b282f2;box-sizing:border-box"></div>
<div class="b" style="left:0px;top:895px;width:1600.00px;height:49.00px;background:linear-gradient(rgba(40,40,70,0) 0%,rgba(40,40,70,0.035) 100%)"></div>
</div></body></html>
